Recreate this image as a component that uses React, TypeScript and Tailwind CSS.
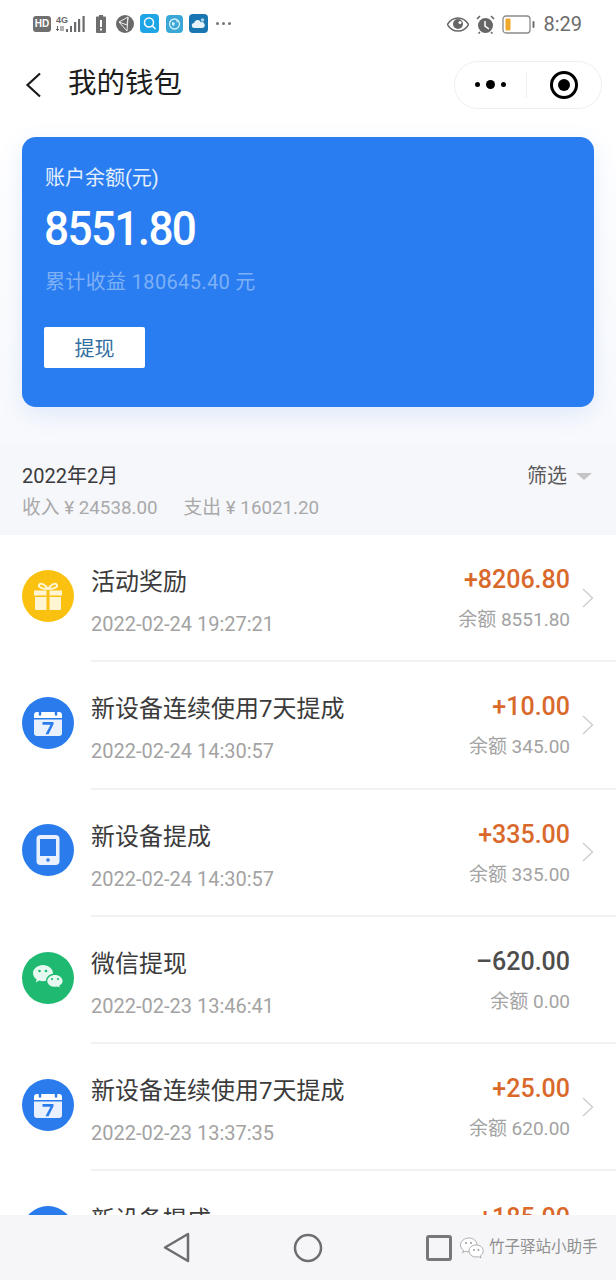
const cjk = "font-['Roboto','Noto_Sans_CJK_SC',sans-serif]";

type Row = {
  title: string;
  time: string;
  amount: string;
  balance: string;
  icon: "gift" | "calendar" | "phone" | "wechat";
  out?: boolean;
  arrow?: boolean;
};

// the last row is cut by the bottom bar, only its title and amount show
const rows: Row[] = [
  { title: "活动奖励", time: "2022-02-24 19:27:21", amount: "+8206.80", balance: "余额 8551.80", icon: "gift", arrow: true },
  { title: "新设备连续使用7天提成", time: "2022-02-24 14:30:57", amount: "+10.00", balance: "余额 345.00", icon: "calendar", arrow: true },
  { title: "新设备提成", time: "2022-02-24 14:30:57", amount: "+335.00", balance: "余额 335.00", icon: "phone", arrow: true },
  { title: "微信提现", time: "2022-02-23 13:46:41", amount: "–620.00", balance: "余额 0.00", icon: "wechat", out: true },
  { title: "新设备连续使用7天提成", time: "2022-02-23 13:37:35", amount: "+25.00", balance: "余额 620.00", icon: "calendar", arrow: true },
  { title: "新设备提成", time: "", amount: "+185.00", balance: "", icon: "phone" },
];

function RowIcon({ icon }: { icon: Row["icon"] }) {
  if (icon === "gift") {
    return (
      <svg width="52" height="52" viewBox="0 0 52 52">
        <circle cx="26" cy="26" r="26" fill="#fbc110" />
        <path d="M12 20.500h12.500v5H12zM27.500 20.500H40v5H27.500zM13 27h11.500v13H14a1 1 0 0 1-1-1zM27.500 27H39v12a1 1 0 0 1-1 1H27.500z" fill="#fff5d2" />
        <path d="M26 19c-3-5-8-6.500-9-4-.8 2.400 3.500 4 9 4zm0 0c3-5 8-6.500 9-4 .8 2.400-3.500 4-9 4z" fill="none" stroke="#fff5d2" strokeWidth="2" />
      </svg>
    );
  }
  if (icon === "calendar") {
    return (
      <svg width="52" height="52" viewBox="0 0 52 52">
        <circle cx="26" cy="26" r="26" fill="#2a7cec" />
        <path d="M15 15h22a3 3 0 0 1 3 3v3H12v-3a3 3 0 0 1 3-3z" fill="#fff" />
        <path d="M12 22.500h28V36a3 3 0 0 1-3 3H15a3 3 0 0 1-3-3z" fill="#e8f1fd" />
        <path d="M18 12.500v5M34 12.500v5" stroke="#2a7cec" strokeWidth="2.500" strokeLinecap="round" />
        <path d="M20.500 25h11v2.200l-5 10h-3l5-9.500h-8z" fill="#2a7cec" />
      </svg>
    );
  }
  if (icon === "phone") {
    return (
      <svg width="52" height="52" viewBox="0 0 52 52">
        <circle cx="26" cy="26" r="26" fill="#2a7cec" />
        <rect x="14.500" y="11" width="23" height="30" rx="4" fill="#e8f1fd" />
        <rect x="18" y="15" width="16" height="17" fill="#2a7cec" />
        <circle cx="26" cy="36" r="1.800" fill="#2a7cec" />
      </svg>
    );
  }
  return (
    <svg width="52" height="52" viewBox="0 0 52 52">
      <circle cx="26" cy="26" r="26" fill="#1fb971" />
      <path d="M21 13c-5.500 0-10 3.700-10 8.200 0 2.600 1.400 4.700 3.700 6.200l-1 3 3.500-1.800c1.200.4 2.500.6 3.800.6 5.500 0 10-3.700 10-8s-4.500-8.200-10-8.200z" fill="#e6f8ef" />
      <path d="M33 21.500c-5 0-9 3.200-9 7.200s4 7.200 9 7.200c1.100 0 2.100-.2 3.100-.5l3 1.600-.8-2.600c2.100-1.300 3.700-3.400 3.700-5.700 0-4-4-7.200-9-7.200z" fill="#1fb971" />
      <path d="M33 23c-4.300 0-7.700 2.700-7.700 5.900s3.400 5.900 7.700 5.900c1 0 1.900-.2 2.800-.4l2 1-.5-1.800c1.900-1.100 3.300-2.800 3.300-4.700 0-3.200-3.400-5.900-7.600-5.900z" fill="#e6f8ef" />
      <circle cx="17.500" cy="19" r="1.300" fill="#1fb971" />
      <circle cx="24" cy="19" r="1.300" fill="#1fb971" />
      <circle cx="30" cy="27" r="1.100" fill="#1fb971" />
      <circle cx="36" cy="27" r="1.100" fill="#1fb971" />
    </svg>
  );
}

function StatusLeft() {
  return (
    <div className="flex items-center">
      <div className="w-[18px] h-[16px] rounded-[3px] bg-[#6f6f6f] text-white text-[10px] leading-[16px] font-bold text-center font-['Liberation_Sans',sans-serif]">HD</div>
      <svg className="ml-[5px]" width="30" height="18" viewBox="0 0 30 18">
        <text x="0" y="8" fontSize="9" fontWeight="700" fill="#666" fontFamily="Liberation Sans">4G</text>
        <path d="M1.500 11v5M0 14.500h3M5 11v5M7 11v5" stroke="#666" strokeWidth="1" />
        <path d="M10 14h2v3h-2zM14 11h2v6h-2zM18 7h2.200v10H18zM22 4h2.200v13H22zM26.500 1h2.200v16h-2.200z" fill="#6b6b6b" />
      </svg>
      <svg className="ml-[10px]" width="10" height="18" viewBox="0 0 10 18">
        <path d="M3 0h4v1.500h2a1 1 0 0 1 1 1V17a1 1 0 0 1-1 1H1a1 1 0 0 1-1-1V2.500a1 1 0 0 1 1-1h2z" fill="#6e6e6e" />
        <path d="M4 5h2v7H4zM4 13.500h2v2H4z" fill="#fff" />
      </svg>
      <svg className="ml-[10px]" width="18" height="18" viewBox="0 0 18 18">
        <circle cx="9" cy="9" r="9" fill="#6a6a6a" />
        <path d="M3 7l9-5-1 14-8-9zM3 7l8 3 1-8" fill="none" stroke="#eee" strokeWidth="1" />
      </svg>
      <svg className="ml-[6px]" width="19" height="19" viewBox="0 0 19 19">
        <rect width="19" height="19" rx="4" fill="#1ea5e6" />
        <circle cx="9" cy="8.500" r="4.500" fill="none" stroke="#fff" strokeWidth="1.500" />
        <path d="M12.500 12l3 3" stroke="#fff" strokeWidth="1.500" />
      </svg>
      <svg className="ml-[7px]" width="17" height="18" viewBox="0 0 17 18">
        <rect width="17" height="18" rx="4" fill="#3ba7d6" />
        <circle cx="8.500" cy="9" r="5" fill="none" stroke="#d5f1fb" strokeWidth="1.300" />
        <path d="M6 7l3 1-1 3-2-1zM10 5l2 1-1 2z" fill="#d5f1fb" />
      </svg>
      <svg className="ml-[6px]" width="19" height="19" viewBox="0 0 19 19">
        <rect width="19" height="19" rx="4" fill="#1976b0" />
        <path d="M5.500 14a2.500 2.500 0 0 1-.4-5 3.500 3.500 0 0 1 6.700-.8A3 3 0 0 1 13.500 14z" fill="#e6f3fb" />
        <circle cx="13.500" cy="6" r="1.800" fill="#a9d3ea" />
      </svg>
      <div className="ml-[8px] flex gap-[3px]">
        <span className="w-[3px] h-[3px] rounded-full bg-[#777]" />
        <span className="w-[3px] h-[3px] rounded-full bg-[#777]" />
        <span className="w-[3px] h-[3px] rounded-full bg-[#777]" />
      </div>
    </div>
  );
}

function StatusRight() {
  return (
    <div className="flex items-center">
      <svg width="22" height="15" viewBox="0 0 22 15">
        <path d="M0.500 7.500C3 3 7 1 11 1s8 2 10.500 6.500C19 12 15 14 11 14S3 12 .5 7.500z" fill="#fff" stroke="#666" strokeWidth="1.500" />
        <circle cx="11" cy="7" r="5" fill="#666" />
        <circle cx="13" cy="5.500" r="1.500" fill="#fff" />
      </svg>
      <svg className="ml-[7px]" width="19" height="19" viewBox="0 0 19 19">
        <circle cx="9.500" cy="10.500" r="7.500" fill="#666" />
        <path d="M1 4l3-3M18 4l-3-3M4 17l-1.500 1.500M15 17l1.500 1.500" stroke="#666" strokeWidth="1.600" />
        <path d="M9 6v5l4 3" fill="none" stroke="#fff" strokeWidth="1.500" />
      </svg>
      <svg className="ml-[7px]" width="33" height="19" viewBox="0 0 33 19">
        <rect x="1" y="1" width="27" height="17" rx="3" fill="#fff" stroke="#8a8a8a" strokeWidth="1.300" />
        <rect x="3.500" y="3.500" width="5" height="12" rx="1" fill="#efa92c" />
        <rect x="30.500" y="6" width="2" height="7" rx="1" fill="#6f6f6f" />
      </svg>
      <span className="ml-[8px] text-[20px] leading-none text-[#6c6c6c] font-['Roboto',sans-serif]">8:29</span>
    </div>
  );
}

export default function App() {
  return (
    <div className={`w-[616px] h-[1280px] overflow-hidden flex flex-col bg-white ${cjk}`}>
      <div className="h-[46px] pt-[14px] pl-[33px] pr-[34px] flex justify-between items-start shrink-0">
        <StatusLeft />
        <StatusRight />
      </div>

      <div className="h-[77px] shrink-0 flex items-center pl-[25px] pr-[14px]">
        <svg width="17" height="26" viewBox="0 0 17 26">
          <path d="M15 1.500L2.500 13 15 24.500" fill="none" stroke="#1a1a1a" strokeWidth="2.200" />
        </svg>
        <h1 className="ml-[26px] text-[28.500px] leading-none text-[#1c1c1c]">我的钱包</h1>
        <div className="ml-auto w-[148px] h-[48px] rounded-full border border-[#efefef] flex items-center">
          <div className="flex-1 flex items-center justify-center gap-[6px]">
            <span className="w-[5px] h-[5px] rounded-full bg-black" />
            <span className="w-[9px] h-[9px] rounded-full bg-black" />
            <span className="w-[5px] h-[5px] rounded-full bg-black" />
          </div>
          <div className="w-px h-[26px] bg-[#eeeeee]" />
          <div className="w-[74px] flex justify-center">
            <div className="w-[28px] h-[28px] rounded-full border-[3px] border-black flex items-center justify-center">
              <span className="w-[12px] h-[12px] rounded-full bg-black" />
            </div>
          </div>
        </div>
      </div>

      <div className="shrink-0 bg-gradient-to-b from-white to-[#f8f9fc] px-[22px] pt-[14px] pb-[38px]">
        <div className="h-[270px] rounded-[14px] bg-[#2a7df0] pl-[23px] pt-[28px] shadow-[0_8px_24px_rgba(42,125,240,0.12)]">
          <div className="text-[20px] leading-[26px] text-[#e4effd]">账户余额(元)</div>
          <div className="mt-[13px] -ml-px w-fit origin-left scale-x-[0.9] text-[49px] leading-[50px] font-medium text-white tracking-[-1.800px]">8551.80</div>
          <div className="mt-[15px] text-[20px] leading-[26px] tracking-[0.350px] text-[#7db0f6]">累计收益 180645.40 元</div>
          <button className="mt-[32px] -ml-px block w-[101px] h-[41px] pt-[2px] rounded-[2px] bg-white text-[20px] text-[#336f9f]">提现</button>
        </div>
      </div>

      <div className="h-[90px] shrink-0 bg-[#f6f7fb] px-[22px] pt-[16px]">
        <div className="flex justify-between items-center h-[30px]">
          <span className="text-[20px] text-[#3a3a3a]">2022年2月</span>
          <span className="flex items-center text-[20px] text-[#5a5a5a] pr-[2px]">
            筛选
            <span className="ml-[9px] mt-[1px] w-0 h-0 border-x-[8px] border-x-transparent border-t-[7px] border-t-[#c4c4c4]" />
          </span>
        </div>
        <div className="mt-[4px] flex gap-[26px] text-[18.800px] leading-[26px] text-[#a9a9a9]">
          <span>收入 ¥ 24538.00</span>
          <span>支出 ¥ 16021.20</span>
        </div>
      </div>

      <div className="flex-1 min-h-0 overflow-hidden bg-white">
        {rows.map((r, i) => (
          <div key={i} className="h-[127.300px] flex items-center pl-[22px]">
            <div className="shrink-0 w-[52px] h-[52px] -mt-[6px]">
              <RowIcon icon={r.icon} />
            </div>
            <div className={`ml-[17px] flex-1 h-full flex items-center pr-[22px] ${i < 5 ? "border-b-2 border-[#f1f1f3]" : ""}`}>
              <div className="flex-1 min-w-0 mt-[8px]">
                <div className="text-[24px] leading-[32px] text-[#3b3b3b]">{r.title}</div>
                <div className="mt-[13px] h-[26px] text-[20px] leading-[26px] text-[#a3a3a3]">{r.time}</div>
              </div>
              <div className="text-right mt-[2px]">
                <div className={`text-[25px] leading-[32px] font-medium ${r.out ? "text-[#4d4d4d]" : "text-[#d9692b]"}`}>{r.amount}</div>
                <div className="mt-[11px] h-[26px] text-[19px] leading-[26px] text-[#a3a3a3]">{r.balance}</div>
              </div>
              <div className="w-[12px] ml-[12px] shrink-0 flex justify-end">
                {r.arrow && (
                  <svg width="12" height="20" viewBox="0 0 12 20">
                    <path d="M1 1l9.500 9L1 19" fill="none" stroke="#cfcfcf" strokeWidth="1.500" />
                  </svg>
                )}
              </div>
            </div>
          </div>
        ))}
      </div>

      <div className="h-[65px] shrink-0 bg-[#f6f6f9] flex items-center pl-[163px]">
        <svg className="shrink-0" width="27" height="31" viewBox="0 0 27 31">
          <path d="M25 2L2 15.500 25 29z" fill="none" stroke="#6e6e6e" strokeWidth="2.500" strokeLinejoin="round" />
        </svg>
        <svg className="ml-[103px] shrink-0" width="30" height="30" viewBox="0 0 30 30">
          <circle cx="15" cy="15" r="13" fill="none" stroke="#6e6e6e" strokeWidth="2.500" />
        </svg>
        <div className="ml-[103px] shrink-0 w-[26px] h-[26px] rounded-[3px] border-[3px] border-[#777]" />
        <svg className="ml-[8px] shrink-0" width="24" height="22" viewBox="0 0 24 22">
          <path d="M9 1C4 1 .5 4.500.5 8c0 2.200 1.200 4 3 5.200l-.8 2.500 2.800-1.500c1.200.4 2.300.6 3.500.6 4.500 0 8-3 8-6.800S13.500 1 9 1z" fill="#fff" stroke="#999" strokeWidth=".8" />
          <path d="M16 8c-4 0-7 2.700-7 6s3 6 7 6c.9 0 1.700-.2 2.500-.4l2.500 1.400-.7-2.200c1.700-1.100 2.900-2.800 2.900-4.800 0-3.300-3-6-7-6z" fill="#fff" stroke="#999" strokeWidth=".8" />
          <circle cx="6" cy="6" r="1" fill="#999" />
          <circle cx="11" cy="6" r="1" fill="#999" />
          <circle cx="14" cy="13" r=".9" fill="#999" />
          <circle cx="18.500" cy="13" r=".9" fill="#999" />
        </svg>
        <span className="ml-[5px] text-[15.500px] leading-none text-[#8f8f8f] whitespace-nowrap">竹子驿站小助手</span>
      </div>
    </div>
  );
}
